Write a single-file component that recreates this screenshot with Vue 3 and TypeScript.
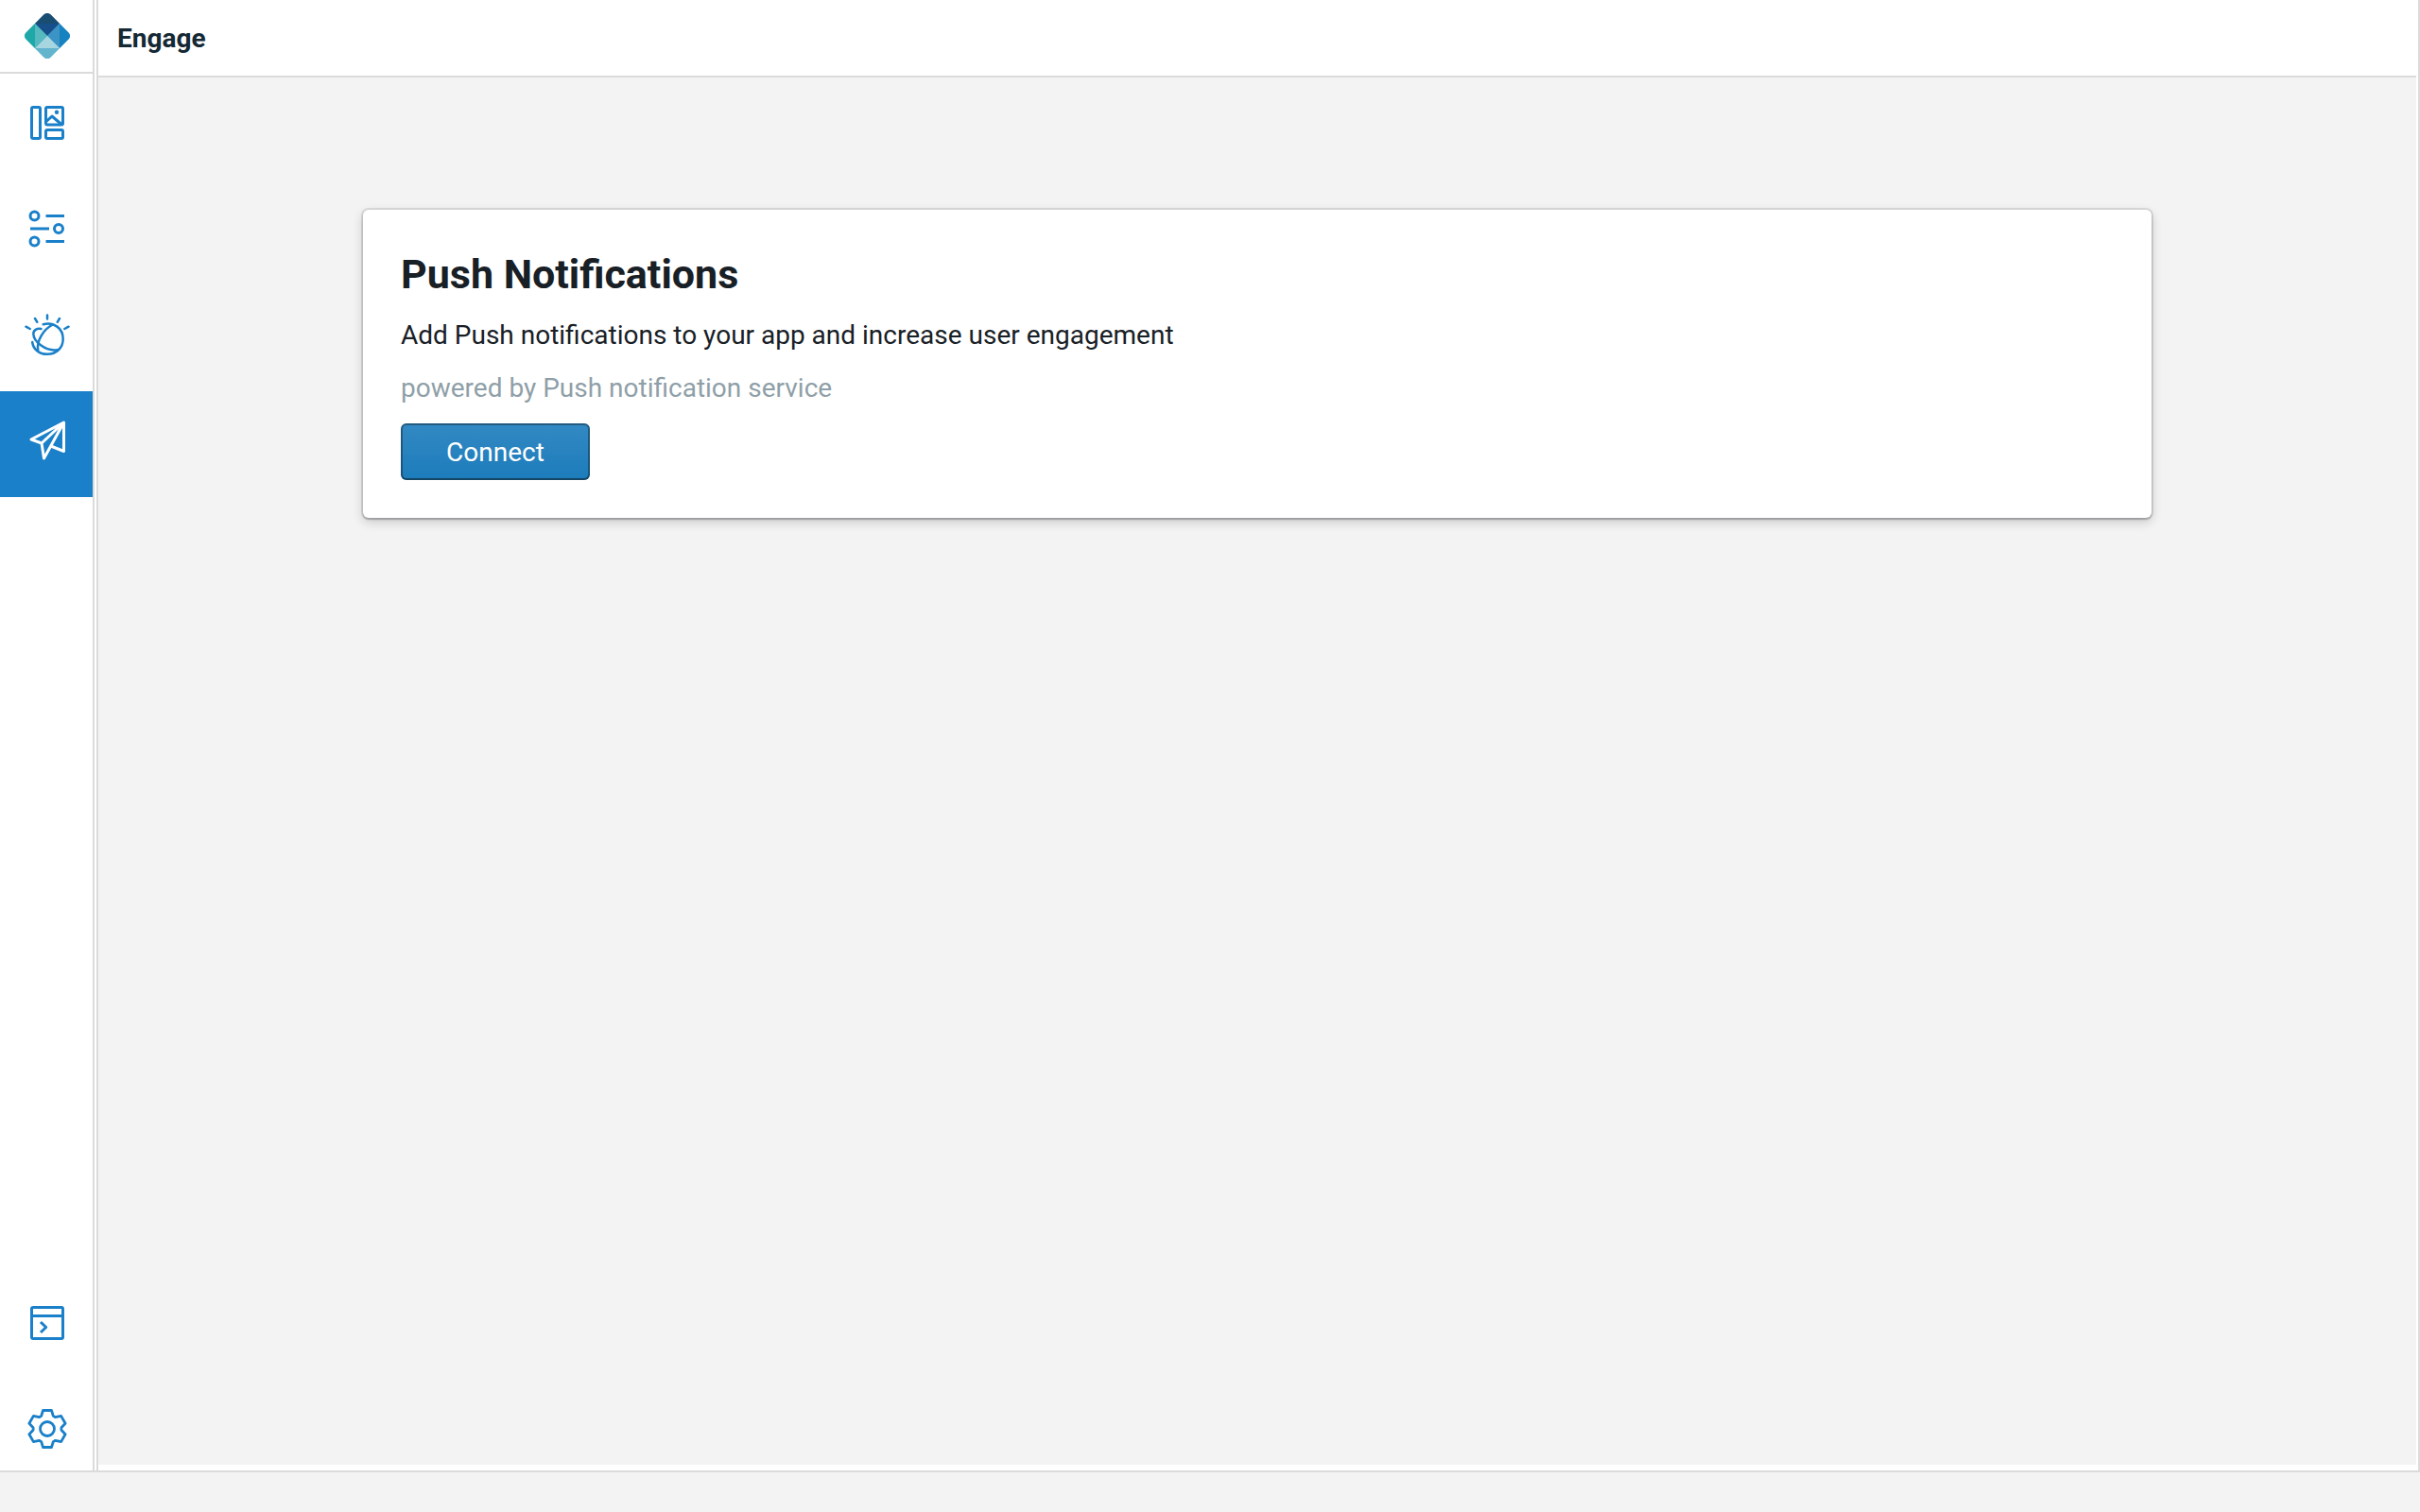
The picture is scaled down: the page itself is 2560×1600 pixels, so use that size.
<script setup lang="ts">
import { ref } from 'vue'

interface NavItem {
  id: string
  label: string
}

const mainItems: NavItem[] = [
  { id: 'studio', label: 'Studio' },
  { id: 'data', label: 'Data' },
  { id: 'watson', label: 'Watson' },
  { id: 'engage', label: 'Engage' },
]

const footerItems: NavItem[] = [
  { id: 'console', label: 'Console' },
  { id: 'settings', label: 'Settings' },
]

const active = ref('engage')
</script>

<template>
  <div class="shell">
    <aside class="sidebar">
      <a class="logo" href="#" aria-label="Home">
        <svg width="48" height="48" viewBox="0 0 48 48" aria-hidden="true">
          <defs>
            <clipPath id="diamond">
              <rect x="5.5" y="5.5" width="37" height="37" rx="5" transform="rotate(45 24 24)" />
            </clipPath>
          </defs>
          <g clip-path="url(#diamond)">
            <path d="M24 24L-2 -2H50z" fill="#1a4d72" />
            <path d="M24 24L50 -2V50z" fill="#1682bf" />
            <path d="M24 24L50 50H-2z" fill="#62b5cd" />
            <path d="M24 24L-2 50V-2z" fill="#1fa8a8" />
            <path d="M24 24L11 11H37z" fill="#174f8a" />
            <path d="M24 24L37 11V37z" fill="#3c93c5" />
            <path d="M24 24L37 37H11z" fill="#a7d6e1" />
            <path d="M24 24L11 37V11z" fill="#56b9c0" />
          </g>
        </svg>
      </a>

      <nav class="nav nav-main" aria-label="Main">
        <a
          v-for="item in mainItems"
          :key="item.id"
          href="#"
          class="nav-item"
          :class="{ active: active === item.id }"
          :aria-label="item.label"
          @click.prevent="active = item.id"
        >
          <svg v-if="item.id === 'studio'" class="icon" viewBox="0 0 48 48" stroke-width="3">
            <rect x="7.5" y="7.5" width="9" height="33" rx="1.5" />
            <rect x="22.5" y="7.5" width="18" height="18.5" rx="1.5" />
            <rect x="22.5" y="31.5" width="18" height="9" rx="1.5" />
            <path d="M23 22.5L29 17L39.5 26" />
            <circle class="solid" cx="34" cy="12.7" r="2.2" />
          </svg>
          <svg v-else-if="item.id === 'data'" class="icon" viewBox="0 0 48 48" stroke-width="3">
            <circle cx="10.5" cy="10.5" r="4.5" />
            <circle cx="36" cy="24" r="4.5" />
            <circle cx="10.5" cy="37.5" r="4.5" />
            <path d="M22.5 10.5H42M6 24H26M22.5 37.5H42" />
          </svg>
          <svg v-else-if="item.id === 'watson'" class="icon" viewBox="0 0 48 48" stroke-width="2.5" stroke-linecap="round">
            <path d="M24 3.5V7.5M11 7L13.3 10.8M37 7L34.7 10.8M1.5 15.7L5.7 18M46.5 15.7L42.3 18" />
            <path d="M19.7 13.2C31 10.2 40.7 17.5 40.7 28.7C40.7 38 33.5 44.8 24 44.8C15.5 44.8 9 39.5 8.2 32" />
            <path d="M17.5 18C13 17.2 9.3 19.3 9.3 23.3C9.5 31 21.5 42 34.5 40.2" />
            <path d="M29 14C20 18.5 12.5 31 14.2 40.5" />
          </svg>
          <svg v-else class="icon" viewBox="0 0 48 48" stroke-width="3">
            <path d="M41.5 5L7 23L18 27L20.5 43L27.7 30L41.5 35.5zM41.5 5L18 27M41.5 5L27.7 30" />
          </svg>
        </a>
      </nav>

      <nav class="nav nav-footer" aria-label="Tools">
        <a
          v-for="item in footerItems"
          :key="item.id"
          href="#"
          class="nav-item"
          :class="{ active: active === item.id }"
          :aria-label="item.label"
          @click.prevent="active = item.id"
        >
          <svg v-if="item.id === 'console'" class="icon" viewBox="0 0 48 48" stroke-width="3">
            <rect x="7.5" y="7.5" width="33" height="33" rx="1.5" />
            <path d="M7.5 16.5H40.5M17 23L22.7 28.5L17 34" />
          </svg>
          <svg v-else class="icon" viewBox="-24 -24 48 48" stroke-width="2.8">
            <path
              d="M-4.5 -19.5H4.5L6.3 -13.6L8.6 -12.3L14.6 -13.6L19.1 -5.8L14.9 -1.3V1.3L19.1 5.8L14.6 13.6L8.6 12.3L6.3 13.6L4.5 19.5H-4.5L-6.3 13.6L-8.6 12.3L-14.6 13.6L-19.1 5.8L-14.9 1.3V-1.3L-19.1 -5.8L-14.6 -13.6L-8.6 -12.3L-6.3 -13.6z"
            />
            <circle r="7.5" />
          </svg>
        </a>
      </nav>
    </aside>

    <div class="page">
      <header class="topbar">
        <h1>Engage</h1>
      </header>
      <main class="content">
        <section class="card">
          <h2>Push Notifications</h2>
          <p>Add Push notifications to your app and increase user engagement</p>
          <p class="muted">powered by Push notification service</p>
          <button type="button" class="connect">Connect</button>
        </section>
      </main>
    </div>
  </div>
</template>

<style>
body {
  background: #f3f3f3;
}
</style>

<style scoped>
.shell {
  box-sizing: border-box;
  display: flex;
  gap: 2px;
  height: calc(100vh - 42px);
  background: #fff;
  border-right: 2px solid #dbdbdb;
  border-bottom: 2px solid #dbdbdb;
  color: #182026;
  font-family: Roboto, "Liberation Sans", sans-serif;
  font-size: 28px;
  line-height: 36px;
}

.sidebar {
  display: flex;
  flex: none;
  flex-direction: column;
  width: 98px;
  border-right: 2px solid #dbdbdb;
}

.logo {
  display: flex;
  justify-content: center;
  padding: 14px 0 14px 2px;
  border-bottom: 2px solid #dbdbdb;
}

.nav-footer {
  margin-top: auto;
}

.nav-item {
  box-sizing: border-box;
  display: flex;
  align-items: center;
  justify-content: center;
  height: 112px;
  padding-left: 2px;
  color: #1a80c9;
}

.nav-main .nav-item {
  padding-bottom: 8px;
}

.nav-footer .nav-item {
  padding-top: 24px;
}

.nav-item.active {
  background: #1a80c9;
  color: #fff;
}

.icon {
  width: 48px;
  height: 48px;
  fill: none;
  stroke: currentColor;
  stroke-linejoin: round;
}

.solid {
  fill: currentColor;
  stroke: none;
}

.page {
  display: flex;
  flex: 1;
  flex-direction: column;
  min-width: 0;
  padding: 0 2px 6px 0;
  border-left: 2px solid #dbdbdb;
}

.topbar {
  box-sizing: border-box;
  display: flex;
  align-items: center;
  height: 82px;
  padding: 2px 20px 0;
  border-bottom: 2px solid #dbdbdb;
}

h1 {
  margin: 0;
  color: #152935;
  font-size: 28px;
  font-weight: 700;
}

.content {
  flex: 1;
  padding: 140px 280px 0;
  background: #f3f3f3;
}

.card {
  padding: 41px 40px 40px;
  border-radius: 6px;
  background: #fff;
  box-shadow:
    0 0 0 2px rgba(16, 22, 26, 0.1),
    0 2px 2px rgba(16, 22, 26, 0.2),
    0 4px 12px rgba(16, 22, 26, 0.2);
}

h2 {
  margin: 0 0 20px;
  font-size: 43px;
  font-weight: 700;
  line-height: 54px;
}

p {
  margin: 0 0 20px;
}

.muted {
  margin-bottom: 19px;
  color: #8f9fa8;
}

.connect {
  display: block;
  width: 200px;
  height: 60px;
  padding: 2px 0 0;
  border: 0;
  border-radius: 6px;
  background: linear-gradient(#3389c3, #1c7cbb);
  box-shadow:
    inset 0 0 0 2px rgba(16, 22, 26, 0.4),
    inset 0 -2px 0 rgba(16, 22, 26, 0.2);
  color: #fff;
  font: inherit;
  cursor: pointer;
}
</style>
